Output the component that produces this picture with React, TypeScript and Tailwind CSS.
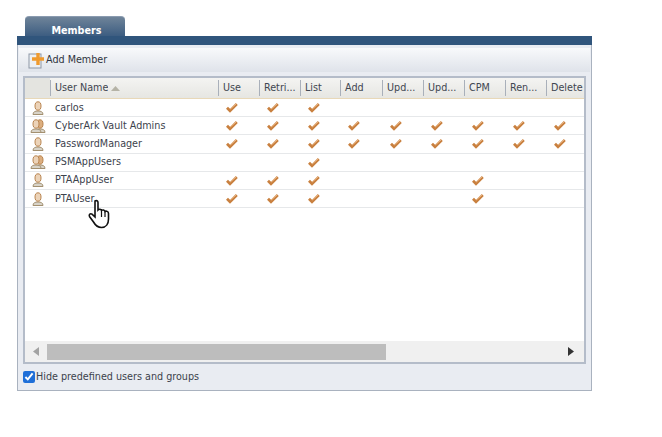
import React from 'react';

const columns = ['Use', 'Retri...', 'List', 'Add', 'Upd...', 'Upd...', 'CPM', 'Ren...', 'Delete'];

const members = [
  { name: 'carlos', group: false, perms: [1, 1, 1, 0, 0, 0, 0, 0, 0] },
  { name: 'CyberArk Vault Admins', group: true, perms: [1, 1, 1, 1, 1, 1, 1, 1, 1] },
  { name: 'PasswordManager', group: false, perms: [1, 1, 1, 1, 1, 1, 1, 1, 1] },
  { name: 'PSMAppUsers', group: true, perms: [0, 0, 1, 0, 0, 0, 0, 0, 0] },
  { name: 'PTAAppUser', group: false, perms: [1, 1, 1, 0, 0, 0, 1, 0, 0] },
  { name: 'PTAUser', group: false, perms: [1, 1, 1, 0, 0, 0, 1, 0, 0] },
];

const gridCols = 'grid grid-cols-[25px_168px_41px_41px_40px_42px_41px_41px_41px_41px_37px]';

const Check = () => (
  <svg width="12" height="11" viewBox="0 0 12 11" className="block ml-[8px]">
    <path d="M1 5.8 L4 8.8 L10.8 2" fill="none" stroke="#c9803f" strokeWidth="2.8" />
    <path d="M4.2 7 L10 1.8" fill="none" stroke="#f2c79c" strokeWidth="1" />
  </svg>
);

const Person = ({ x = 0, color = '#ecd3b8' }: { x?: number; color?: string }) => (
  <g transform={`translate(${x} 0)`}>
    <path d="M3 14.5 C3 11.8 5 11 8 11 C11 11 13 11.8 13 14.5 Z" fill="#d8d3c8" stroke="#a39070" strokeWidth="1" />
    <ellipse cx="8" cy="6" rx="3" ry="4.2" fill={color} stroke="#b9844f" strokeWidth="1" />
  </g>
);

const UserIcon = ({ group }: { group: boolean }) => (
  <svg width="18" height="16" viewBox="0 0 18 16" className="block">
    {group ? (
      <>
        <Person x={3} color="#dcae7f" />
        <Person x={-1} />
      </>
    ) : (
      <Person x={1} />
    )}
  </svg>
);

const HeaderCell = ({ label, sorted }: { label: string; sorted?: boolean }) => (
  <div className="flex items-center h-full min-w-0">
    <div className="w-px h-[16px] bg-[#a9b0ba] shrink-0" />
    <span className="pl-[4px] text-[10.7px] text-[#3f4650] whitespace-nowrap overflow-hidden">{label}</span>
    {sorted && (
      <svg width="9" height="5" viewBox="0 0 9 5" className="ml-[3px] shrink-0">
        <path d="M0 5 L4.5 0 L9 5 Z" fill="#b5b3a6" />
      </svg>
    )}
  </div>
);

export default function App() {
  return (
    <div className="relative w-[662px] h-[437px] bg-white pl-[17px] pt-[16px] overflow-hidden font-['DejaVu_Sans_Condensed','Liberation_Sans',sans-serif]">
      {/* Tab */}
      <div className="ml-[8px] w-[100px] h-[21px] -mb-px pt-[8px] pl-[3px] rounded-t-[4px] border-t border-[#8a9bb0] bg-gradient-to-b from-[#6f8499] to-[#3a5b80] flex items-center justify-center">
        <span className="text-[10.7px] font-bold text-white">Members</span>
      </div>

      {/* Panel */}
      <div className="w-[575px] h-[355px] border border-t-0 border-[#a9b2bf] bg-[#e9ecf2] flex flex-col">
        <div className="h-[9px] bg-[#30557c] shrink-0 -mx-px" />

        {/* Toolbar */}
        <div className="mt-[3px] h-[24px] mx-px shrink-0 bg-gradient-to-b from-[#f8f9fb] to-[#dfe3ea] flex items-center pl-[9px]">
          <svg width="18" height="18" viewBox="0 0 18 18" className="shrink-0">
            <rect x="1" y="3" width="12" height="14" fill="#edf0f4" stroke="#8d97a6" />
            <path d="M10 2 V14 M4 8 H16" stroke="#ef9a2e" strokeWidth="3.4" />
          </svg>
          <span className="text-[10.7px] text-[#2f3540]">Add Member</span>
        </div>

        {/* Grid */}
        <div className="mt-[4px] mx-[5px] h-[288px] shrink-0 border-2 border-[#b4bcc9] bg-white flex flex-col overflow-hidden">
          <div className={`${gridCols} h-[21px] shrink-0 bg-gradient-to-b from-[#f4f4f2] to-[#e6e6e2] border-b border-[#e8d8b8] items-center`}>
            <div className="bg-[#e4e4e0] h-full" />
            <HeaderCell label="User Name" sorted />
            {columns.map((c, i) => (
              <HeaderCell key={i} label={c} />
            ))}
          </div>

          <div className="flex-1">
            {members.map((m) => (
              <div key={m.name} className={`${gridCols} h-[18.2px] border-b border-[#e6e8ea] items-center`}>
                <div className="flex justify-center">
                  <UserIcon group={m.group} />
                </div>
                <div className="pl-[5px] text-[10.7px] text-[#3c424c] whitespace-nowrap">{m.name}</div>
                {m.perms.map((p, i) => (
                  <div key={i} className="flex justify-start">
                    {p ? <Check /> : null}
                  </div>
                ))}
              </div>
            ))}
          </div>

          {/* Scrollbar */}
          <div className="h-[21px] shrink-0 bg-[#f0f0f0] flex items-center">
            <div className="w-[22px] flex justify-center shrink-0">
              <svg width="6" height="9" viewBox="0 0 6 9">
                <path d="M6 0 L0 4.5 L6 9 Z" fill="#a3a3a3" />
              </svg>
            </div>
            <div className="w-[339px] h-[16px] bg-[#bdbdbd] shrink-0" />
            <div className="flex-1" />
            <div className="w-[26px] flex justify-center shrink-0">
              <svg width="6" height="9" viewBox="0 0 6 9">
                <path d="M0 0 L6 4.5 L0 9 Z" fill="#333" />
              </svg>
            </div>
          </div>
        </div>

        {/* Footer */}
        <label className="flex items-center pl-[5px] flex-1">
          <input type="checkbox" defaultChecked className="w-[12px] h-[12px] m-0 accent-[#1f6fd8]" />
          <span className="pl-px text-[10.7px] text-[#3c424c]">Hide predefined users and groups</span>
        </label>
      </div>

      {/* Mouse pointer */}
      <svg width="24" height="30" viewBox="0 0 24 30" className="absolute left-[87px] top-[199px]">
        <path
          d="M8 2 C9.5 1 11 2 11 3.5 V11 C12 10 14 10 14.5 11.5 C15.5 10.5 17.5 11 18 12.5 C19 11.8 21.5 12.2 21.5 14.5 V20 C21.5 25 19 28.5 14.5 28.5 C10.5 28.5 8.5 26.5 6.5 23 L2.5 17.5 C1.5 15.5 3.5 14 5 15.2 L8 18 Z"
          fill="#fff"
          stroke="#111"
          strokeWidth="1.6"
        />
        <path d="M14.5 12 V18 M18 13 V18" stroke="#111" strokeWidth="1.2" />
      </svg>
    </div>
  );
}
